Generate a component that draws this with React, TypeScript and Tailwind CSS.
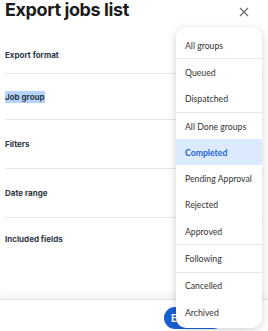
import React from "react";

const items: { label: string; divider?: boolean; active?: boolean }[] = [
  { label: "All groups", divider: true },
  { label: "Queued" },
  { label: "Dispatched", divider: true },
  { label: "All Done groups" },
  { label: "Completed", active: true },
  { label: "Pending Approval" },
  { label: "Rejected" },
  { label: "Approved", divider: true },
  { label: "Following", divider: true },
  { label: "Cancelled" },
  { label: "Archived" },
];

export default function App() {
  return (
    <div className="relative w-[268px] h-[331px] overflow-hidden bg-white font-['Inter',sans-serif]">
      <div className="flex items-start justify-between pl-[5px] pr-[19px] h-[37px]">
        <h1 className="text-[18px] leading-[19px] font-bold text-[#1c1c1c] tracking-[-0.4px]">
          Export jobs list
        </h1>
        <svg width="10" height="10" viewBox="0 0 10 10" className="mt-[7px]" stroke="#6b6b6b" strokeWidth="1.2" fill="none">
          <path d="M1 1L9 9M9 1L1 9" />
        </svg>
      </div>
      <div className="pl-[5px] pr-[5px] text-[8px] font-bold text-[#2e3846]">
        <div className="h-[37px] flex items-center border-b border-[#e6e6e6]">Export format</div>
        <div className="h-[46px] flex items-center border-b border-[#e6e6e6]">
          <span className="bg-[#b4d4fb]">Job group</span>
        </div>
        <div className="h-[49px] flex items-center border-b border-[#e6e6e6]">Filters</div>
        <div className="h-[49px] flex items-center border-b border-[#e6e6e6]">Date range</div>
        <div className="pt-[15px]">Included fields</div>
      </div>
      <div className="absolute left-0 right-0 top-[299px] bottom-0 bg-white border-t border-[#e2e2e2] shadow-[0_-5px_8px_rgba(0,0,0,0.05)]">
        <div className="absolute left-[164px] top-[7px] h-[22px] w-[60px] rounded-full bg-[#1a5fd3] text-white text-[10px] font-bold leading-[22px] pl-[7px]">
          Export
        </div>
      </div>
      <div className="absolute left-[176px] top-[27px] w-[86px] h-[301px] rounded-[10px] bg-white shadow-[0_2px_8px_rgba(0,0,0,0.18)] pt-[5px] font-['Lato',sans-serif] text-[8.7px] text-[#333]">
        {items.map((it) => (
          <div key={it.label} className={it.divider ? "border-b border-[#e6e6e6]" : ""}>
            <div
              className={
                "h-[26.3px] flex items-center pl-[9px] whitespace-nowrap " +
                (it.active ? "bg-[#dbeafe] text-[#2563d6] font-bold" : "")
              }
            >
              {it.label}
            </div>
          </div>
        ))}
      </div>
    </div>
  );
}
